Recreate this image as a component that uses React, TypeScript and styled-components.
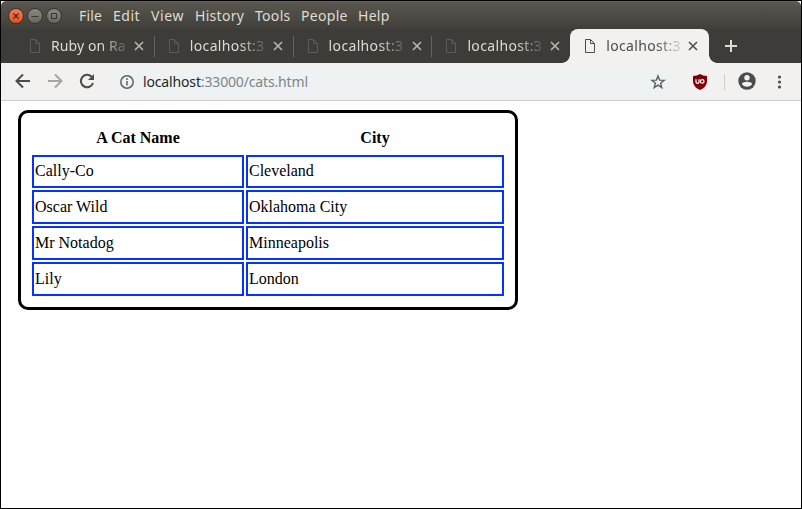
import React from "react";
import styled, { createGlobalStyle } from "styled-components";

const GlobalStyle = createGlobalStyle`
  *, *::before, *::after { box-sizing: border-box; }
  body { margin: 0; background: #000; }
  svg { display: block; flex: none; }
`;

const Window = styled.div`
  display: flex;
  flex-direction: column;
  width: 802px;
  height: 509px;
  border: 1px solid #000;
  background: #fff;
  font-family: "Noto Sans", "Open Sans", sans-serif;
  overflow: hidden;
`;

const TitleBar = styled.header`
  display: flex;
  align-items: center;
  flex: none;
  height: 28px;
  padding: 1px 0 0 7px;
  border-top: 1px solid #66645a;
  border-radius: 5px 5px 0 0;
  background: linear-gradient(#59574e, #403f3a);
`;

const WindowButtons = styled.div`
  display: flex;
  gap: 3px;
  width: 71px;
`;

const WindowButton = styled.span<{ $close?: boolean }>`
  display: flex;
  align-items: center;
  justify-content: center;
  width: 16px;
  height: 16px;
  border: 1px solid #353430;
  border-radius: 50%;
  background: ${(p) => (p.$close ? "linear-gradient(#f47b53, #e3501f)" : "linear-gradient(#8a8880, #66655f)")};
`;

const Menu = styled.nav`
  display: flex;
  gap: 10px;
`;

const MenuItem = styled.span<{ $width: number; $spacing: number }>`
  width: ${(p) => p.$width}px;
  letter-spacing: ${(p) => p.$spacing}px;
  color: #dfdbd2;
  font-size: 14px;
  line-height: 20px;
  white-space: nowrap;
`;

const TabStrip = styled.div`
  display: flex;
  flex: none;
  height: 34px;
  padding-left: 14px;
  background: #3d3c38;
`;

const Tab = styled.div<{ $active?: boolean; $divider?: boolean }>`
  position: relative;
  display: flex;
  align-items: center;
  width: ${(p) => (p.$active ? 139 : 138.8)}px;
  height: 34px;
  padding-left: 14px;
  border-radius: 8px 8px 0 0;
  background: ${(p) => (p.$active ? "#f2f1f0" : "transparent")};
  color: ${(p) => (p.$active ? "#4c4c4c" : "#dfdbd2")};

  &::before,
  &::after {
    content: "";
    display: ${(p) => (p.$active ? "block" : "none")};
    position: absolute;
    bottom: 0;
    width: 8px;
    height: 8px;
  }
  &::before {
    left: -8px;
    background: radial-gradient(circle at 0 0, transparent 7.5px, #f2f1f0 8px);
  }
  &::after {
    right: -8px;
    background: radial-gradient(circle at 100% 0, transparent 7.5px, #f2f1f0 8px);
  }
  ${(p) =>
    p.$divider &&
    `&::after { display: block; right: -1px; bottom: 6px; width: 1px; height: 21px; background: #65635e; }`}
`;

const TabTitle = styled.span<{ $spacing: number; $active?: boolean }>`
  width: 75px;
  margin: 0 ${(p) => (p.$active ? 7 : 8)}px 0 10px;
  white-space: nowrap;
  font-size: 14px;
  line-height: 20px;
  letter-spacing: ${(p) => p.$spacing}px;
  mask-image: linear-gradient(to right, #000 50px, transparent 80px);
`;

const NewTab = styled.div`
  display: flex;
  align-items: center;
  margin-left: 15px;
`;

const Toolbar = styled.div`
  display: flex;
  align-items: center;
  flex: none;
  height: 38px;
  padding-left: 12px;
  border-bottom: 1px solid #cecdcc;
  background: #f2f1f0;
`;

const NavButtons = styled.div`
  display: flex;
  flex: none;
  gap: 12px;
  width: 96px;
  padding-bottom: 1px;
`;

const AddressBar = styled.div`
  display: flex;
  align-items: center;
  flex: none;
  width: 567px;
  height: 29px;
  padding: 0 10px;
  border-radius: 14px;
  background: #eef2f3;
`;

const Address = styled.span`
  flex: 1;
  margin-left: 8px;
  color: #7c858a;
  font-size: 14px;
  line-height: 20px;
  letter-spacing: -0.15px;
  white-space: nowrap;
`;

const Host = styled.span`
  color: #252829;
`;

const Actions = styled.div`
  display: flex;
  align-items: center;
  flex: none;
  margin-left: 16px;
`;

const ActionDivider = styled.span`
  width: 1px;
  height: 16px;
  margin: 0 12px 0 16px;
  background: #cfcecd;
`;

const ProfileSlot = styled.span`
  padding-bottom: 1px;
`;

const Page = styled.main`
  flex: 1;
  padding: 9px 0 0 17px;
  background: #fff;
`;

const CatTable = styled.div`
  display: grid;
  grid-template-columns: 212px 258px;
  grid-template-rows: 31px 33px 34px 34px 34px;
  gap: 2px;
  width: 500px;
  height: 200px;
  padding: 9px 11px;
  border: 3px solid #000;
  border-radius: 10px;
  color: #000;
  font-family: "Liberation Serif", serif;
  font-size: 16px;
`;

const HeaderCell = styled.div`
  padding-top: 7px;
  text-align: center;
  font-weight: bold;
  line-height: 18px;
`;

const Cell = styled.div`
  padding: 5px 1px 0;
  border: 2px solid #0433ff;
  line-height: 18px;

  &:nth-child(n + 5) {
    padding-top: 6px;
  }
`;

const menus = [
  { label: "File", width: 24, spacing: 0.2 },
  { label: "Edit", width: 28, spacing: 0.5 },
  { label: "View", width: 34, spacing: 0.6 },
  { label: "History", width: 50, spacing: 0.3 },
  { label: "Tools", width: 36, spacing: 0.3 },
  { label: "People", width: 47, spacing: 0.3 },
  { label: "Help", width: 32, spacing: 0.3 },
];

const tabs = [
  { title: "Ruby on Ra", spacing: 0.1, divider: true },
  { title: "localhost:3", spacing: 0.35, divider: true },
  { title: "localhost:3", spacing: 0.35, divider: true },
  { title: "localhost:3", spacing: 0.35 },
  { title: "localhost:3", spacing: 0.35, active: true },
];

const cats = [
  ["Cally-Co", "Cleveland"],
  ["Oscar Wild", "Oklahoma City"],
  ["Mr Notadog", "Minneapolis"],
  ["Lily", "London"],
];

const PageIcon = ({ color }: { color: string }) => (
  <svg width="12" height="14" viewBox="0 0 12 14" fill="none" stroke={color}>
    <path d="M1.5.5h5l4 4v9h-9zM6.5.5v4h4" />
  </svg>
);

const CloseIcon = ({ color }: { color: string }) => (
  <svg width="10" height="10" viewBox="0 0 10 10" stroke={color} strokeWidth="1.7">
    <path d="M1 1l8 8M9 1L1 9" />
  </svg>
);

const Arrow = ({ color, flip }: { color: string; flip?: boolean }) => (
  <svg width="20" height="20" viewBox="0 0 20 20" fill="none" stroke={color} strokeWidth="2">
    <path d={flip ? "M3 10h13M10 3.5l6.5 6.5-6.5 6.5" : "M17 10H4M10 3.5L3.5 10l6.5 6.5"} />
  </svg>
);

export default function App() {
  return (
    <>
      <GlobalStyle />
      <Window>
        <TitleBar>
          <WindowButtons>
            <WindowButton $close>
              <svg width="6" height="6" viewBox="0 0 6 6" stroke="#4b2a1d" strokeWidth="1.2"><path d="M.5.5l5 5M5.5.5l-5 5" /></svg>
            </WindowButton>
            <WindowButton>
              <svg width="8" height="8" viewBox="0 0 8 8" stroke="#383733"><path d="M.5 4.5h7" /></svg>
            </WindowButton>
            <WindowButton>
              <svg width="8" height="8" viewBox="0 0 8 8" fill="none" stroke="#383733"><path d="M1.5 1.5h5v5h-5z" /></svg>
            </WindowButton>
          </WindowButtons>
          <Menu>
            {menus.map((m) => (
              <MenuItem key={m.label} $width={m.width} $spacing={m.spacing}>{m.label}</MenuItem>
            ))}
          </Menu>
        </TitleBar>
        <TabStrip>
          {tabs.map((t, i) => (
            <Tab key={i} $active={t.active} $divider={t.divider}>
              <PageIcon color={t.active ? "#4c4c4c" : "#5d5b58"} />
              <TabTitle $spacing={t.spacing} $active={t.active}>{t.title}</TabTitle>
              <CloseIcon color={t.active ? "#555" : "#b6b3ad"} />
            </Tab>
          ))}
          <NewTab>
            <svg width="14" height="14" viewBox="0 0 14 14" stroke="#dfdbd2" strokeWidth="2"><path d="M7 1v12M1 7h12" /></svg>
          </NewTab>
        </TabStrip>
        <Toolbar>
          <NavButtons>
            <Arrow color="#4c4c4c" />
            <Arrow color="#a6a5a4" flip />
            <svg width="20" height="20" viewBox="0 0 20 20" fill="none" stroke="#4c4c4c" strokeWidth="2">
              <path d="M16 12A6.2 6.2 0 1 1 14.5 5.6L16 7" />
              <path d="M17 3v6h-6z" fill="#4c4c4c" stroke="none" />
            </svg>
          </NavButtons>
          <AddressBar>
            <svg width="16" height="16" viewBox="0 0 16 16" fill="none" stroke="#5b6265" strokeWidth="1.5">
              <circle cx="8" cy="8" r="6.2" />
              <path d="M8 7v4.5M8 4.3v1.6" />
            </svg>
            <Address><Host>localhost</Host>:33000/cats.html</Address>
            <svg width="16" height="16" viewBox="0 0 16 16" fill="none" stroke="#5b6265" strokeWidth="1.4">
              <path d="M8 2l1.6 4.1 4.5.3-3.5 2.8 1.2 4.4L8 11.2l-3.8 2.4 1.2-4.4-3.5-2.8 4.5-.3z" />
            </svg>
          </AddressBar>
          <Actions>
            <svg width="16" height="16" viewBox="0 0 16 16" fill="none">
              <path d="M8 0Q11 2 15 2v6Q14.5 13 8 16 1.5 13 1 8V2q4 0 7-2z" fill="#800009" />
              <path d="M4 5.3v2.6q0 1.4 1.5 1.4T7 7.9V5.3" stroke="#fff" strokeWidth="1.2" />
              <circle cx="10.2" cy="7.4" r="1.8" stroke="#fff" strokeWidth="1.2" />
            </svg>
            <ActionDivider />
            <ProfileSlot>
              <svg width="20" height="20" viewBox="0 0 20 20">
                <circle cx="10" cy="10" r="8.7" fill="#4c4c4c" />
                <circle cx="10" cy="6.8" r="2.7" fill="#f2f1f0" />
                <path d="M4.8 13.1c1-3 9.4-3 10.4 0-2.3 3.5-8.1 3.5-10.4 0z" fill="#f2f1f0" />
              </svg>
            </ProfileSlot>
            <svg width="43" height="16" viewBox="0 0 43 16" fill="#4c4c4c">
              <circle cx="22.5" cy="3" r="1.6" /><circle cx="22.5" cy="8" r="1.6" /><circle cx="22.5" cy="13" r="1.6" />
            </svg>
          </Actions>
        </Toolbar>
        <Page>
          <CatTable role="table">
            <HeaderCell>A Cat Name</HeaderCell>
            <HeaderCell>City</HeaderCell>
            {cats.flat().map((text) => (
              <Cell key={text}>{text}</Cell>
            ))}
          </CatTable>
        </Page>
      </Window>
    </>
  );
}
